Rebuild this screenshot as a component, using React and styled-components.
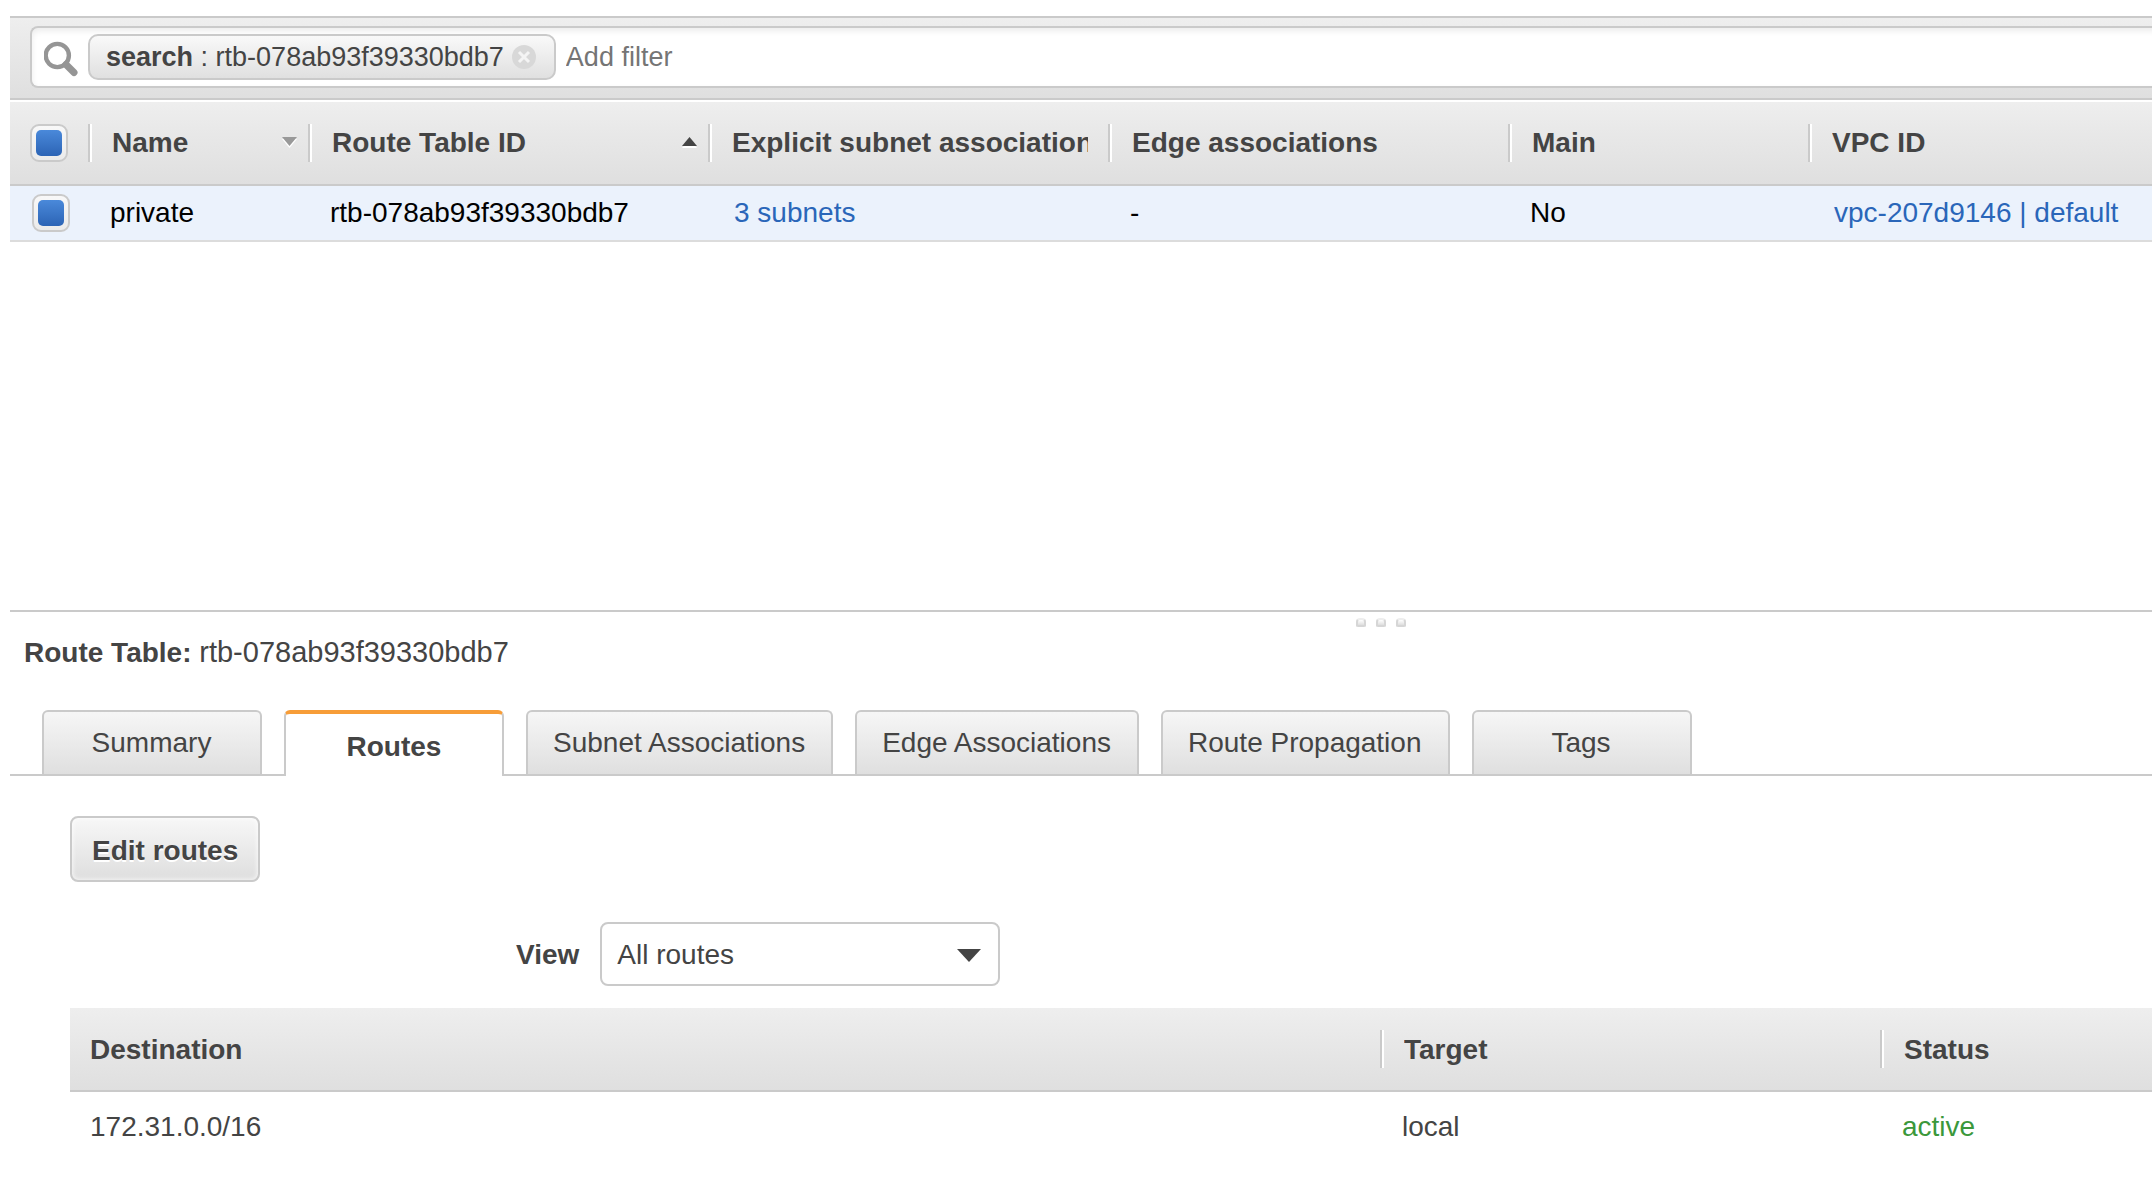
import React, { useState } from "react";
import styled, { createGlobalStyle, css } from "styled-components";

const GlobalStyle = createGlobalStyle`
  *, *::before, *::after { box-sizing: border-box; }
  body {
    margin: 0;
    background: #fff;
    color: #444;
    font: 28px/32px "Liberation Sans", Arial, sans-serif;
  }
  button, input, select { font: inherit; color: inherit; margin: 0; }
`;

const line = "#cacaca";
const barFill = "linear-gradient(#eeeeee, #dfdfdf)";

const Page = styled.div`
  display: flex;
  flex-direction: column;
  min-height: 100vh;
  padding: 16px 0 0 10px;
  overflow: hidden;
`;

const Toolbar = styled.div`
  padding: 8px 0 10px 20px;
  border: solid ${line};
  border-width: 2px 0;
  background: ${barFill};
`;

const SearchBox = styled.div`
  display: flex;
  align-items: center;
  height: 62px;
  margin-right: -12px;
  padding-left: 12px;
  border: 2px solid ${line};
  border-right: 0;
  border-radius: 8px 0 0 8px;
  background: #fff;
  box-shadow: inset 0 3px 6px rgba(0, 0, 0, 0.08);
  font-size: 27px;
`;

const SearchIcon = styled.svg`
  flex: none;
  width: 36px;
  height: 40px;
  margin-right: 8px;
`;

const Chip = styled.span`
  display: flex;
  flex: none;
  align-items: center;
  height: 46px;
  padding: 0 18px 0 16px;
  border: 2px solid ${line};
  border-radius: 10px;
  background: linear-gradient(#f9f9f9, #e0e0e0);
  white-space: pre;
`;

const ChipRemove = styled.button`
  display: flex;
  margin-left: 8px;
  padding: 0;
  border: 0;
  background: none;
  cursor: pointer;
`;

const FilterInput = styled.input`
  flex: 1;
  min-width: 0;
  height: 44px;
  padding: 0 10px;
  border: 0;
  outline: 0;
  background: transparent;
  &::placeholder { color: #757575; opacity: 1; }
`;

const ListPane = styled.div`
  flex: 1 0 auto;
  padding-top: 2px;
`;

const Table = styled.table`
  width: 100%;
  table-layout: fixed;
  border-collapse: separate;
  border-spacing: 0;
`;

const Col = styled.col`
  width: ${(p) => p.$width || "auto"};
`;

const HeadCell = styled.th`
  height: 84px;
  padding: 0;
  border-bottom: 2px solid ${line};
  background: ${barFill};
  text-align: left;
`;

const HeadContent = styled.div`
  display: flex;
  align-items: center;
  gap: 20px;
  padding: 0 ${(p) => (p.$sorted ? "11px" : "20px")} 0 ${(p) => (p.$first ? "20px" : "0")};
`;

const Divider = styled.span`
  flex: none;
  width: 4px;
  height: 38px;
  border-left: 2px solid ${line};
  background: #fff;
`;

const HeadLabel = styled.span`
  flex: 1;
  padding-top: ${(p) => (p.$low ? "2px" : "0")};
  overflow: hidden;
  white-space: nowrap;
`;

const ListCell = styled.td`
  height: 56px;
  padding: 0 0 0 22px;
  border-bottom: 2px solid #dcdcdc;
  background: #ebf2fc;
  color: #000;
  white-space: nowrap;
`;

const CellLink = styled.a`
  padding-left: 4px;
  color: #2a66b9;
  text-decoration: none;
`;

const CheckBox = styled.input`
  display: grid;
  place-items: center;
  appearance: none;
  flex: none;
  width: 38px;
  height: 38px;
  border: 2px solid ${line};
  border-radius: 9px;
  background: linear-gradient(#f8f8f8, #ebebeb);
  &:checked::before {
    content: "";
    width: 26px;
    height: 26px;
    border-radius: 5px;
    background: linear-gradient(#4a89da, #2c64b5);
  }
`;

const DetailPane = styled.section`
  flex: none;
  height: 576px;
  border-top: 2px solid ${line};
`;

const Grip = styled.div`
  display: flex;
  justify-content: center;
  gap: 10px;
  height: 24px;
  padding: 6px 0 0 600px;
`;

const GripDot = styled.span`
  width: 10px;
  height: 9px;
  border: 2px solid #d6d6d6;
  border-top-color: #eeeeee;
  border-radius: 4px 4px 2px 2px;
  background: linear-gradient(#ffffff, #dedede);
`;

const Title = styled.h2`
  margin: 0 0 41px 14px;
  font-size: 28px;
  line-height: 32px;
`;

const ResourceId = styled.span`
  font-size: 29px;
  font-weight: normal;
`;

const Tabs = styled.div`
  display: flex;
  align-items: flex-start;
  gap: 22px;
  height: 66px;
  padding-left: 32px;
  border-bottom: 2px solid ${line};
`;

const Tab = styled.button`
  flex: none;
  min-width: 220px;
  height: 64px;
  padding: 15px 26px 15px 25px;
  border: 2px solid ${line};
  border-bottom: 0;
  border-radius: 6px 6px 0 0;
  background: linear-gradient(#f6f6f6, #dfdfdf);
  cursor: pointer;
  ${(p) =>
    p.$active &&
    css`
      height: 66px;
      padding: 17px 25px 13px;
      border-top: 4px solid #f79d38;
      background: #fff;
      font-weight: bold;
    `}
`;

const TabPanel = styled.div`
  padding: 40px 0 0 60px;
`;

const ActionButton = styled.button`
  display: block;
  padding: 17px 20px 13px;
  border: 2px solid ${line};
  border-radius: 8px;
  background: linear-gradient(#f7f7f7, #dedede);
  box-shadow: inset 0 0 4px 1px rgba(255, 255, 255, 0.7);
  font-weight: bold;
  text-shadow: 0 2px 0 #fff;
  cursor: pointer;
`;

const ViewRow = styled.div`
  display: flex;
  align-items: center;
  gap: 21px;
  padding: 40px 0 22px 446px;
`;

const ViewLabel = styled.label`
  padding-top: 2px;
  font-weight: bold;
`;

const SelectFrame = styled.div`
  display: grid;
  grid-template-columns: 1fr;
  align-items: center;
  width: 400px;
`;

const Select = styled.select`
  grid-area: 1 / 1;
  height: 64px;
  padding: 2px 40px 0 15px;
  border: 2px solid ${line};
  border-radius: 8px;
  background: #fff;
  appearance: none;
`;

const SelectArrow = styled.svg`
  grid-area: 1 / 1;
  justify-self: end;
  width: 24px;
  height: 16px;
  margin-right: 19px;
  pointer-events: none;
`;

const RouteCell = styled.td`
  padding: 19px 0 19px ${(p) => (p.$first ? "20px" : "22px")};
  color: ${(p) => (p.$ok ? "#3b983b" : "inherit")};
`;

const columns = [
  { label: "Name", width: "220px", sort: "down" },
  { label: "Route Table ID", width: "400px", sort: "up" },
  { label: "Explicit subnet associations", width: "400px" },
  { label: "Edge associations", width: "400px" },
  { label: "Main", width: "300px" },
  { label: "VPC ID" },
];

const routeColumns = [
  { label: "Destination", width: "1310px" },
  { label: "Target", width: "500px" },
  { label: "Status" },
];

const tabs = [
  "Summary",
  "Routes",
  "Subnet Associations",
  "Edge Associations",
  "Route Propagation",
  "Tags",
];

const tableId = "rtb-078ab93f39330bdb7";

function SortArrow({ direction }) {
  const up = direction === "up";
  const shape = up ? "M0 9 L7.5 0 L15 9Z" : "M0 0 H15 L7.5 9Z";
  return (
    <svg width="15" height="13" viewBox="0 0 15 13" aria-hidden="true">
      <path d={shape} fill="#fff" transform="translate(0 2)" />
      <path d={shape} fill={up ? "#444" : "#999"} />
    </svg>
  );
}

function HeaderCell({ column, first, low }) {
  return (
    <HeadCell scope="col">
      <HeadContent $first={first} $sorted={Boolean(column.sort)}>
        {!first && <Divider />}
        <HeadLabel $low={low}>{column.label}</HeadLabel>
        {column.sort && <SortArrow direction={column.sort} />}
      </HeadContent>
    </HeadCell>
  );
}

export default function App() {
  const [active, setActive] = useState("Routes");
  const [checked, setChecked] = useState(true);
  const toggle = () => setChecked(!checked);

  return (
    <>
      <GlobalStyle />
      <Page>
        <Toolbar>
          <SearchBox>
            <SearchIcon viewBox="0 0 36 40" aria-hidden="true">
              <circle cx="13.3" cy="18.5" r="11.6" fill="none" stroke="#959595" strokeWidth="4.4" />
              <path d="M22 27.5 L30 35.5" stroke="#959595" strokeWidth="7" strokeLinecap="round" />
            </SearchIcon>
            <Chip>
              <b>search</b> : {tableId}
              <ChipRemove aria-label="Remove filter">
                <svg width="24" height="24" viewBox="0 0 24 24" aria-hidden="true">
                  <circle cx="12" cy="12" r="12" fill="#d8d8d8" />
                  <path d="M7 7 L17 17 M17 7 L7 17" stroke="#f4f4f4" strokeWidth="3" />
                </svg>
              </ChipRemove>
            </Chip>
            <FilterInput aria-label="Add filter" placeholder="Add filter" />
          </SearchBox>
        </Toolbar>

        <ListPane>
          <Table>
            <colgroup>
              <Col $width="78px" />
              {columns.map((c) => (
                <Col key={c.label} $width={c.width} />
              ))}
            </colgroup>
            <thead>
              <tr>
                <HeadCell scope="col">
                  <HeadContent $first>
                    <CheckBox type="checkbox" aria-label="Select all" checked={checked} onChange={toggle} />
                  </HeadContent>
                </HeadCell>
                {columns.map((c) => (
                  <HeaderCell key={c.label} column={c} />
                ))}
              </tr>
            </thead>
            <tbody>
              <tr>
                <ListCell>
                  <CheckBox type="checkbox" aria-label="Select private" checked={checked} onChange={toggle} />
                </ListCell>
                <ListCell>private</ListCell>
                <ListCell>{tableId}</ListCell>
                <ListCell>
                  <CellLink href="#subnets">3 subnets</CellLink>
                </ListCell>
                <ListCell>-</ListCell>
                <ListCell>No</ListCell>
                <ListCell>
                  <CellLink href="#vpc">vpc-207d9146 | default</CellLink>
                </ListCell>
              </tr>
            </tbody>
          </Table>
        </ListPane>

        <DetailPane>
          <Grip>
            <GripDot />
            <GripDot />
            <GripDot />
          </Grip>
          <Title>
            Route Table: <ResourceId>{tableId}</ResourceId>
          </Title>
          <Tabs role="tablist">
            {tabs.map((t) => (
              <Tab
                key={t}
                role="tab"
                aria-selected={t === active}
                $active={t === active}
                onClick={() => setActive(t)}
              >
                {t}
              </Tab>
            ))}
          </Tabs>
          <TabPanel role="tabpanel">
            <ActionButton>Edit routes</ActionButton>
            <ViewRow>
              <ViewLabel htmlFor="route-view">View</ViewLabel>
              <SelectFrame>
                <Select id="route-view" defaultValue="All routes">
                  <option>All routes</option>
                </Select>
                <SelectArrow viewBox="0 0 24 16" aria-hidden="true">
                  <path d="M0 3 H24 L12 16Z" fill="#444" />
                </SelectArrow>
              </SelectFrame>
            </ViewRow>
            <Table>
              <colgroup>
                {routeColumns.map((c) => (
                  <Col key={c.label} $width={c.width} />
                ))}
              </colgroup>
              <thead>
                <tr>
                  {routeColumns.map((c, i) => (
                    <HeaderCell key={c.label} column={c} first={i === 0} low />
                  ))}
                </tr>
              </thead>
              <tbody>
                <tr>
                  <RouteCell $first>172.31.0.0/16</RouteCell>
                  <RouteCell>local</RouteCell>
                  <RouteCell $ok>active</RouteCell>
                </tr>
              </tbody>
            </Table>
          </TabPanel>
        </DetailPane>
      </Page>
    </>
  );
}
